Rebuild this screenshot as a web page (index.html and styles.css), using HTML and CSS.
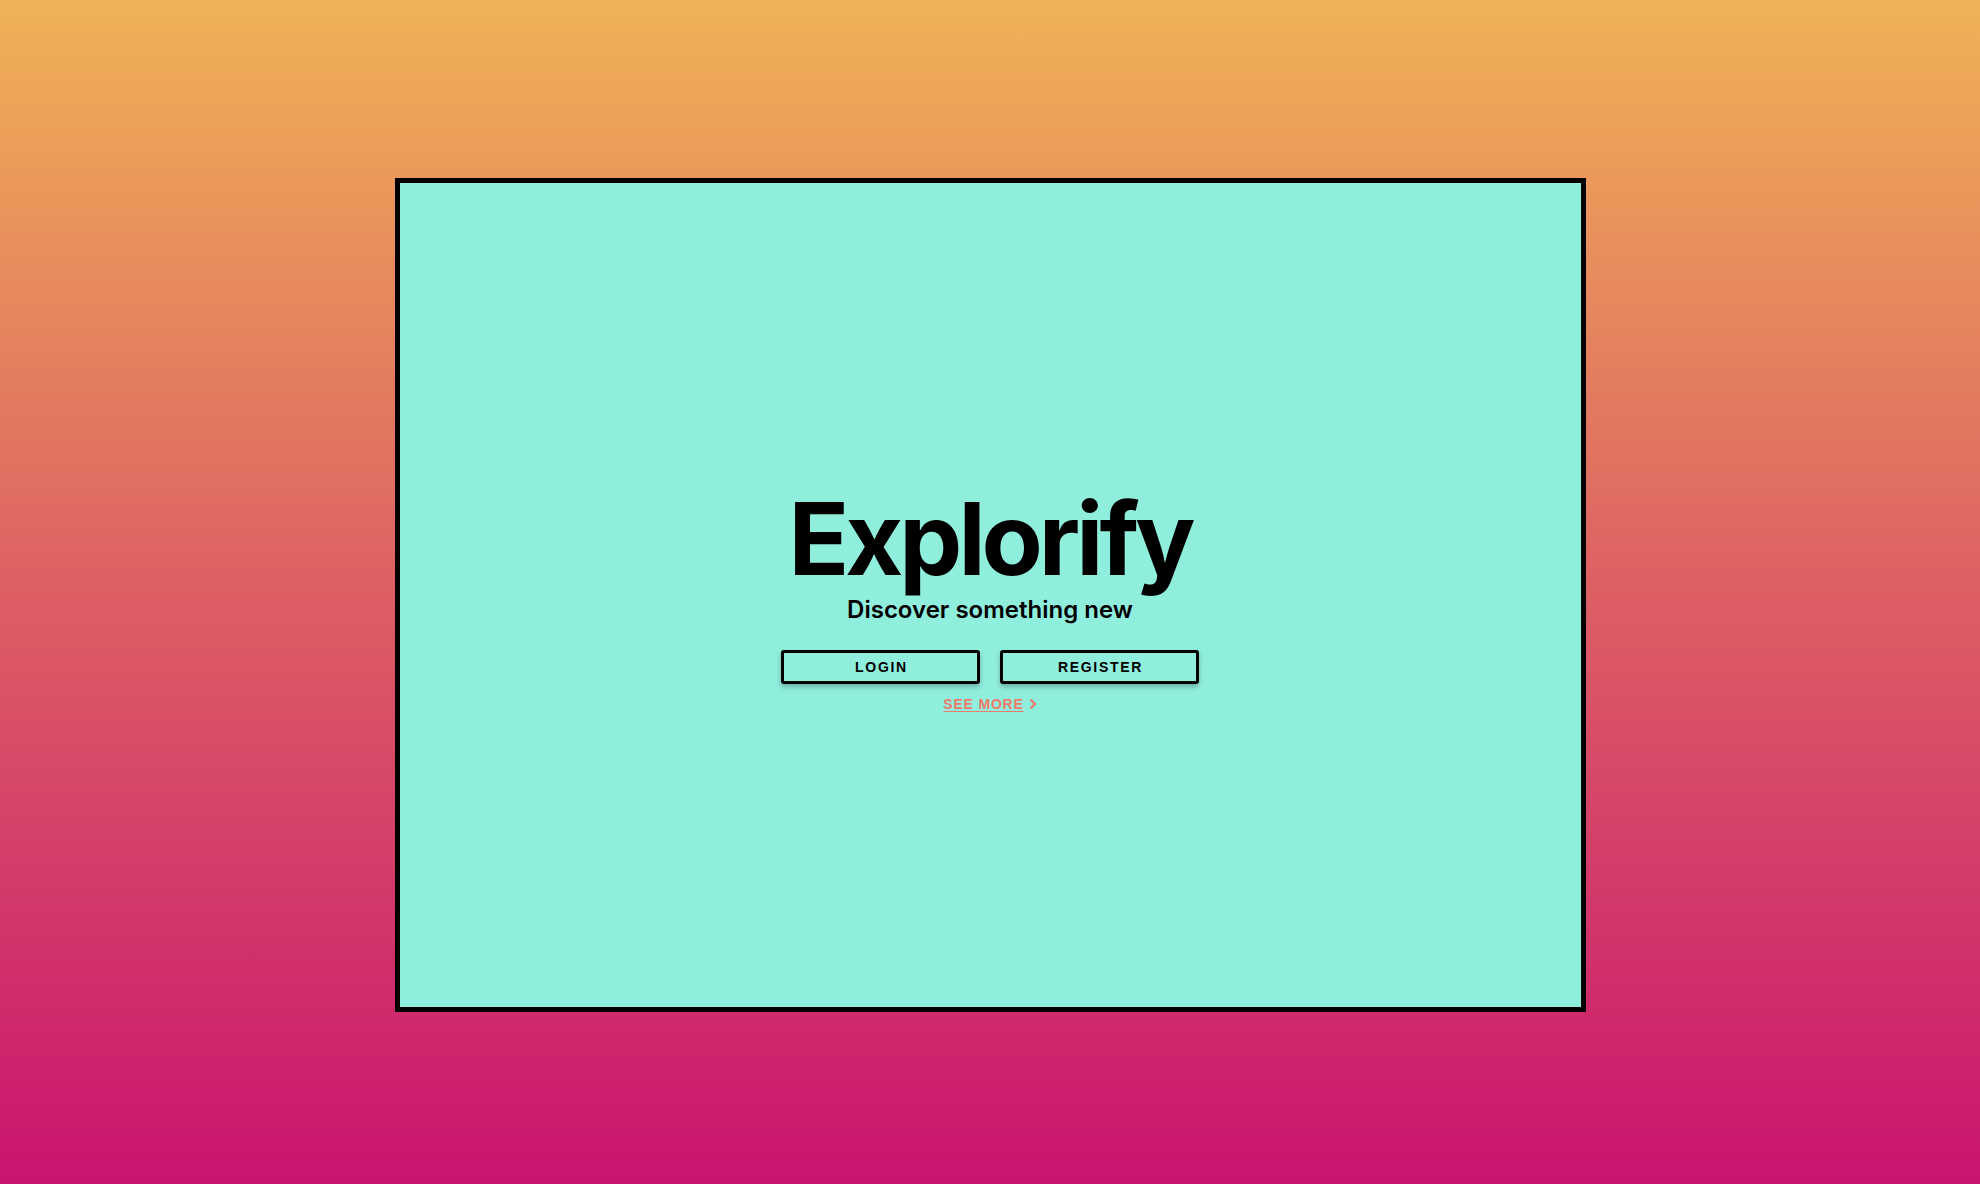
FILE: index.html
```html
<!DOCTYPE html>
<html lang="en">
<head>
<meta charset="utf-8">
<title>Explorify</title>
<link rel="stylesheet" href="styles.css">
</head>
<body>
<main class="card">
  <div class="hero">
    <h1 class="title">Explorify</h1>
    <p class="subtitle">Discover something new</p>
    <div class="actions">
      <button class="btn">LOGIN</button>
      <button class="btn">REGISTER</button>
    </div>
    <a class="more" href="#"><span class="more-text">SEE MORE</span><svg class="chev" width="8" height="12" viewBox="0 0 8 12"><path d="M1.5 1.5 L6 6 L1.5 10.5" fill="none" stroke="#f07a6c" stroke-width="2.2"/></svg></a>
  </div>
</main>
</body>
</html>
```

FILE: styles.css
```css
html, body {
  margin: 0;
  padding: 0;
}
body {
  height: 1184px;
  display: flex;
  align-items: center;
  justify-content: center;
  background: linear-gradient(to bottom, #f0b256 0%, #dd5f64 50%, #c9146f 100%);
  font-family: "Inter", "Liberation Sans", sans-serif;
  padding-top: 6px;
  box-sizing: border-box;
}
.card {
  width: 1191px;
  height: 834px;
  box-sizing: border-box;
  border: 5px solid #000;
  background: #90eedd;
  display: flex;
  align-items: center;
  justify-content: center;
}
.hero {
  display: flex;
  flex-direction: column;
  align-items: center;
  padding-top: 11px;
}
.title {
  margin: 0;
  font-size: 100px;
  font-weight: 700;
  line-height: 100px;
  letter-spacing: -4px;
  color: #000;
}
.subtitle {
  margin: 6px 0 0;
  font-size: 24px;
  font-weight: 600;
  line-height: 30px;
  letter-spacing: 0;
  color: #000;
}
.actions {
  display: flex;
  gap: 20px;
  margin-top: 25px;
}
.btn {
  width: 199px;
  height: 34px;
  box-sizing: border-box;
  border: 3px solid #000;
  border-radius: 3px;
  background: #90eedd;
  font-family: "Liberation Sans", Arial, sans-serif;
  font-weight: 700;
  font-size: 14px;
  letter-spacing: 1.7px;
  color: #000;
  box-shadow: 0 3px 5px rgba(0, 0, 0, 0.25);
  padding: 0 0 0 2px;
}
.more {
  margin-top: 12px;
  display: flex;
  align-items: center;
  gap: 5px;
  line-height: 16px;
  text-decoration: none;
  color: #f07a6c;
  font-family: "Liberation Sans", Arial, sans-serif;
  font-weight: 700;
  font-size: 14px;
  letter-spacing: 0.8px;
}
.more-text {
  text-decoration: underline;
  text-underline-offset: 2px;
}
```
